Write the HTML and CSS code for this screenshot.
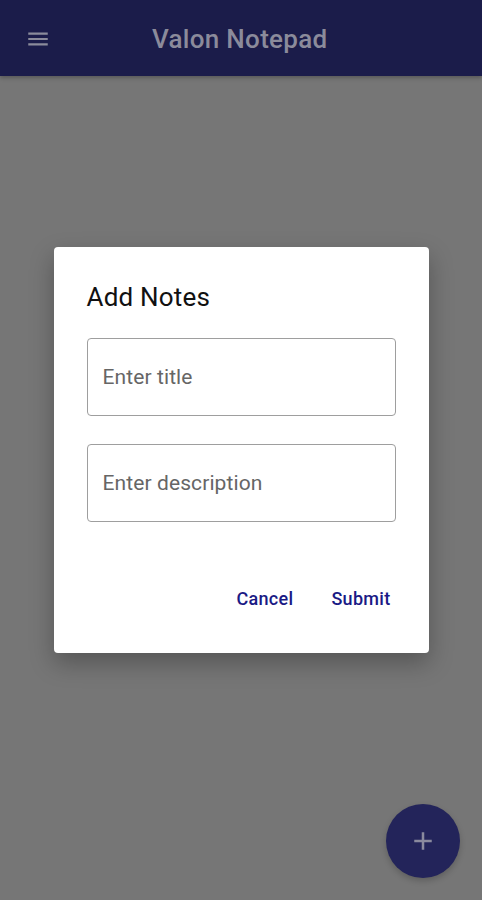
FILE: index.html
```html
<!DOCTYPE html>
<html>
<head>
<meta charset="utf-8">
<link rel="stylesheet" href="styles.css">
</head>
<body>
<header class="appbar">
  <svg class="menu" width="24" height="24" viewBox="0 0 24 24"><path d="M3 18h18v-2H3v2zm0-5h18v-2H3v2zm0-7v2h18V6H3z" fill="currentColor"/></svg>
  <h1 class="title">Valon Notepad</h1>
</header>
<main class="content"></main>
<button class="fab" aria-label="Add">
  <svg width="24" height="24" viewBox="0 0 24 24"><path d="M19 13h-6v6h-2v-6H5v-2h6V5h2v6h6v2z" fill="currentColor"/></svg>
</button>
<div class="backdrop">
  <div class="dialog">
    <h2 class="dialog-title">Add Notes</h2>
    <div class="field"><span class="placeholder">Enter title</span></div>
    <div class="field"><span class="placeholder">Enter description</span></div>
    <div class="actions">
      <button class="btn">Cancel</button>
      <button class="btn">Submit</button>
    </div>
  </div>
</div>
</body>
</html>
```
FILE: styles.css
```css
html, body { margin: 0; padding: 0; }
body {
  width: 482px; height: 900px; overflow: hidden;
  background: #767676;
  font-family: Roboto, "Noto Sans", sans-serif;
  position: relative;
}
.appbar {
  height: 76px;
  background: #1b1c4a;
  display: flex; align-items: center;
  padding: 2px 26px 0 26px;
  box-sizing: border-box;
  box-shadow: 0 2px 4px rgba(0,0,0,0.25);
  color: #8b8b9b;
}
.menu { width: 26px; height: 26px; margin-left: -1px; }
.title {
  margin: 0 0 0 101px;
  font-size: 26px; font-weight: 500;
  color: #8b8b9b;
  letter-spacing: 0.3px;
}
.fab {
  position: absolute; right: 22px; bottom: 22px;
  width: 74px; height: 74px; border-radius: 50%;
  border: none; background: #23245a;
  color: #8a8a9e;
  display: flex; align-items: center; justify-content: center;
  box-shadow: 0 3px 6px rgba(0,0,0,0.2);
  padding: 0;
}
.fab svg { width: 30px; height: 30px; }
.backdrop {
  position: absolute; inset: 0;
  display: flex; align-items: center; justify-content: center;
}
.dialog {
  width: 375px; height: 406px;
  box-sizing: border-box;
  background: #ffffff;
  border-radius: 4px;
  padding: 34px 33px 0 33px;
  box-shadow: 0 10px 24px rgba(0,0,0,0.28);
  display: flex; flex-direction: column;
}
.dialog-title {
  margin: 0 0 25px 0;
  font-size: 26px; font-weight: 400; color: #111;
  line-height: 32px;
  letter-spacing: 0.2px;
}
.field {
  height: 78px; box-sizing: border-box;
  border: 1px solid #9e9e9e; border-radius: 4px;
  display: flex; align-items: center;
  padding: 0 15px;
  margin-bottom: 28px;
}
.placeholder { font-size: 21px; color: #666; letter-spacing: 0.1px; }
.actions {
  display: flex; justify-content: flex-end; gap: 38px;
  margin-top: 38px; padding-right: 5px;
}
.btn {
  border: none; background: none; padding: 0;
  font-family: Roboto, sans-serif;
  font-size: 18px; font-weight: 500; color: #1a1a85;
  letter-spacing: 0.3px;
}
```
